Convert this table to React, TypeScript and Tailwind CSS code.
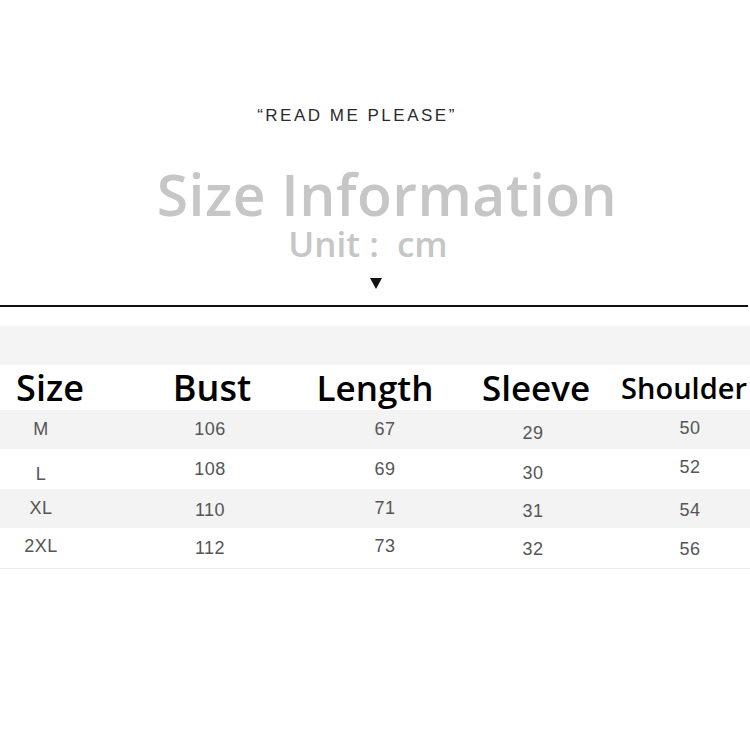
const headers = [
  { label: "Size", cls: "w-[100px] text-[36px] font-semibold" },
  { label: "Bust", cls: "w-[224px] text-[36px] font-semibold" },
  { label: "Length", cls: "w-[102px] text-[35px] font-semibold" },
  { label: "Sleeve", cls: "w-[220px] text-[35px] font-semibold" },
  { label: "Shoulder", cls: "w-[76px] text-[29px] font-semibold" },
];

const colWidths = ["w-[82px]", "w-[256px]", "w-[94px]", "w-[202px]", "w-[112px]"];

const rows = [
  { cells: ["M", "106", "67", "29", "50"], shade: true, shift: ["", "", "", "translate-y-[4px]", "-translate-y-[1px]"] },
  { cells: ["L", "108", "69", "30", "52"], shade: false, shift: ["translate-y-[5px]", "", "", "translate-y-[4px]", "-translate-y-[2px]"] },
  { cells: ["XL", "110", "71", "31", "54"], shade: true, shift: ["", "translate-y-[2px]", "", "translate-y-[3px]", "translate-y-[2px]"] },
  { cells: ["2XL", "112", "73", "32", "56"], shade: false, shift: ["-translate-y-[2px]", "", "-translate-y-[2px]", "translate-y-[1px]", "translate-y-[1px]"] },
];

export default function App() {
  return (
    <div className="w-[750px] h-[750px] bg-white flex flex-col overflow-hidden">
      <div className="mt-[106px] pr-[36px] text-center text-[17px] leading-[20px] tracking-[2.5px] text-[#2a2a2a] font-['Liberation_Sans',Arial,sans-serif]">
        “READ ME PLEASE”
      </div>

      <div className="mt-[42px] pl-[24px] text-center text-[57px] leading-[52px] tracking-[0.5px] font-semibold text-[#c6c6c6] font-['Open_Sans',sans-serif]">
        Size Information
      </div>
      <div className="mt-[7px] pr-[14px] text-center text-[35px] leading-[34px] font-semibold text-[#c6c6c6] font-['Open_Sans',sans-serif]">
        Unit :&nbsp; cm
      </div>

      <div className="mt-[17px] flex justify-center">
        <svg width="12" height="11" viewBox="0 0 12 11" className="ml-[2px]">
          <polygon points="0,0 12,0 6,11" fill="#111" />
        </svg>
      </div>

      <div className="mt-[16px] h-[2px] w-[748px] bg-[#111]" />

      <div className="mt-[19px] h-[39px] bg-[#f4f4f4]" />

      <div className="h-[45px] flex items-center text-black font-['Open_Sans',sans-serif] leading-[45px]">
        {headers.map((h) => (
          <div key={h.label} className={`flex justify-center shrink-0 whitespace-nowrap ${h.cls}`}>
            {h.label}
          </div>
        ))}
      </div>

      <div className="border-b border-[#ececec] font-['Liberation_Sans',Arial,sans-serif] text-[18px] tracking-[0.5px] text-[#555]">
        {rows.map((r, i) => (
          <div
            key={i}
            className={`flex items-center ${i % 2 === 0 ? "h-[39px]" : "h-[40px]"} ${r.shade ? "bg-[#f3f3f3]" : "bg-white"}`}
          >
            {r.cells.map((c, j) => (
              <div key={j} className={`flex justify-center shrink-0 whitespace-nowrap ${colWidths[j]} ${r.shift[j]}`}>
                {c}
              </div>
            ))}
          </div>
        ))}
      </div>
    </div>
  );
}
